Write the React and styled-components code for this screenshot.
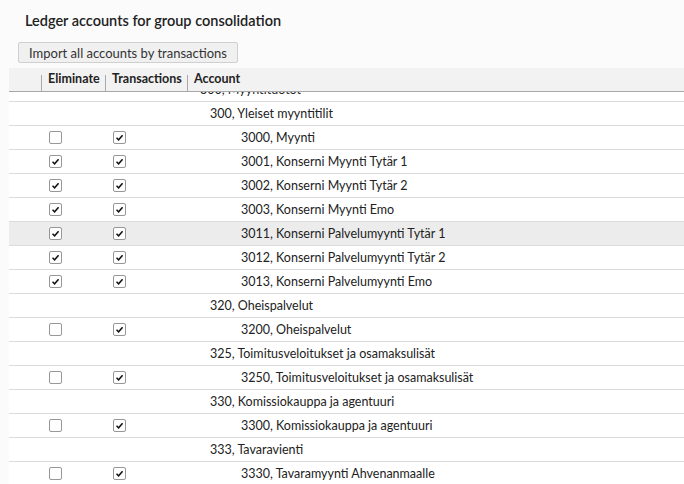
import React from 'react';
import styled, { createGlobalStyle } from 'styled-components';

const GlobalStyle = createGlobalStyle`
  html, body {
    margin: 0;
    padding: 0;
    background: #fbfbfb;
    font-family: Lato, "Liberation Sans", sans-serif;
    color: #222;
  }
`;

const Page = styled.div`
  height: 484px;
  padding-left: 9px;
  display: flex;
  flex-direction: column;
  overflow: hidden;
`;

const Title = styled.h1`
  margin: 12px 0 0 16px;
  font-size: 14.5px;
  line-height: 18px;
  font-weight: 600;
  color: #222;
`;

const ImportButton = styled.button`
  align-self: flex-start;
  margin: 12px 0 0 9px;
  height: 21px;
  padding: 0 10px;
  background: #f0f0f0;
  border: 1px solid #cfcfcf;
  border-radius: 2px;
  font-family: inherit;
  font-size: 13px;
  color: #333;
`;

const cols = '32px 64px 82px 1fr';

const HeaderRow = styled.div`
  margin-top: 5px;
  display: grid;
  grid-template-columns: ${cols};
  height: 23px;
  background: #f2f2f2;
  border-bottom: 1px solid #a8a8a8;
`;

const HeaderCell = styled.div`
  position: relative;
  padding: 3px 0 0 7px;
  font-size: 12.5px;
  font-weight: 700;
  line-height: 16px;
  color: #222;

  ${p => p.$divider && `
    &::before {
      content: '';
      position: absolute;
      left: 0;
      top: 7px;
      bottom: 0;
      border-left: 1px solid #a8a8a8;
    }
  `}
`;

const Body = styled.div`
  flex: 1;
  overflow: hidden;
  background: #fff;
`;

const Rows = styled.div`
  margin-top: -14px;
`;

const Row = styled.div`
  display: grid;
  grid-template-columns: ${cols};
  height: 23px;
  align-items: center;
  border-bottom: 1px solid #dcdcdc;
  background: ${p => (p.$selected ? '#ececec' : '#fff')};
`;

const CheckCell = styled.div`
  padding-left: 8px;
  display: flex;
  align-items: center;
`;

const Box = styled.span`
  box-sizing: border-box;
  width: 13px;
  height: 13px;
  border: 1px solid #979797;
  border-radius: 2px;
  background: #fff;
  display: flex;
  align-items: center;
  justify-content: center;
`;

const AccountCell = styled.div`
  padding-left: ${p => p.$indent}px;
  font-size: 12.5px;
  color: #222;
  white-space: nowrap;
`;

const Checkbox = ({ checked }) => (
  <Box>
    {checked && (
      <svg width="9" height="9" viewBox="0 0 9 9">
        <path d="M1.5 4.8 L3.6 6.8 L7.6 2.2" fill="none" stroke="#111" strokeWidth="1.5" />
      </svg>
    )}
  </Box>
);

const rows = [
  { label: '300, Myyntituotot', level: 0 },
  { label: '300, Yleiset myyntitilit', level: 1 },
  { label: '3000, Myynti', level: 2, elim: false, trans: true },
  { label: '3001, Konserni Myynti Tytär 1', level: 2, elim: true, trans: true },
  { label: '3002, Konserni Myynti Tytär 2', level: 2, elim: true, trans: true },
  { label: '3003, Konserni Myynti Emo', level: 2, elim: true, trans: true },
  { label: '3011, Konserni Palvelumyynti Tytär 1', level: 2, elim: true, trans: true, selected: true },
  { label: '3012, Konserni Palvelumyynti Tytär 2', level: 2, elim: true, trans: true },
  { label: '3013, Konserni Palvelumyynti Emo', level: 2, elim: true, trans: true },
  { label: '320, Oheispalvelut', level: 1 },
  { label: '3200, Oheispalvelut', level: 2, elim: false, trans: true },
  { label: '325, Toimitusveloitukset ja osamaksulisät', level: 1 },
  { label: '3250, Toimitusveloitukset ja osamaksulisät', level: 2, elim: false, trans: true },
  { label: '330, Komissiokauppa ja agentuuri', level: 1 },
  { label: '3300, Komissiokauppa ja agentuuri', level: 2, elim: false, trans: true },
  { label: '333, Tavaravienti', level: 1 },
  { label: '3330, Tavaramyynti Ahvenanmaalle', level: 2, elim: false, trans: true },
];

const indents = [13, 23, 54];

const App = () => {
  let rowElements = rows.map(row => (
    <Row key={row.label} $selected={row.selected}>
      <div />
      <CheckCell>{row.level === 2 && <Checkbox checked={row.elim} />}</CheckCell>
      <CheckCell>{row.level === 2 && <Checkbox checked={row.trans} />}</CheckCell>
      <AccountCell $indent={indents[row.level]}>{row.label}</AccountCell>
    </Row>
  ));

  return (
    <>
      <GlobalStyle />
      <Page>
        <Title>Ledger accounts for group consolidation</Title>
        <ImportButton>Import all accounts by transactions</ImportButton>
        <HeaderRow>
          <HeaderCell />
          <HeaderCell $divider>Eliminate</HeaderCell>
          <HeaderCell $divider>Transactions</HeaderCell>
          <HeaderCell $divider>Account</HeaderCell>
        </HeaderRow>
        <Body>
          <Rows>{rowElements}</Rows>
        </Body>
      </Page>
    </>
  );
};

export default App;
